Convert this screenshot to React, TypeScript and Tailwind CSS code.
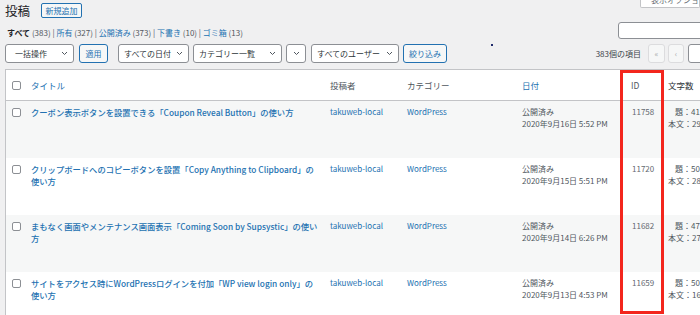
import React from 'react';

// 投稿一覧（WordPress 管理画面）の縮小スクリーンショット

const posts = [
  {
    title: ['クーポン表示ボタンを設置できる「Coupon Reveal Button」の使い方'],
    date: '2020年9月16日 5:52 PM',
    id: '11758',
    t: '41',
    b: '2913',
  },
  {
    title: ['クリップボードへのコピーボタンを設置「Copy Anything to Clipboard」の', '使い方'],
    date: '2020年9月15日 5:51 PM',
    id: '11720',
    t: '50',
    b: '2811',
  },
  {
    title: ['まもなく画面やメンテナンス画面表示「Coming Soon by Supsystic」の使い', '方'],
    date: '2020年9月14日 6:26 PM',
    id: '11682',
    t: '47',
    b: '2790',
  },
  {
    title: ['サイトをアクセス時にWordPressログインを付加「WP view login only」の', '使い方'],
    date: '2020年9月13日 4:53 PM',
    id: '11659',
    t: '50',
    b: '1644',
  },
];

const Chevron = () => (
  <svg width="7" height="5" viewBox="0 0 7 5" className="shrink-0">
    <path d="M1 1l2.5 2.5L6 1" fill="none" stroke="#50575e" strokeWidth="1" />
  </svg>
);

const Select = ({ label, className }: { label?: string; className: string }) => (
  <div
    className={`flex h-[19px] shrink-0 items-center justify-between overflow-hidden rounded-[3px] border border-[#8c8f94] bg-white pr-[5px] text-[#2c3338] ${className}`}
  >
    <span className="whitespace-nowrap">{label}</span>
    <Chevron />
  </div>
);

const Button = ({ label, className }: { label: string; className: string }) => (
  <div
    className={`flex h-[19px] shrink-0 items-center justify-center rounded-[3px] border border-[#2271b1] bg-[#f6f7f7] text-[#2271b1] ${className}`}
  >
    {label}
  </div>
);

const Checkbox = () => (
  <div className="h-[9px] w-[9px] rounded-[2px] border border-[#8c8f94] bg-white" />
);

const cols = 'grid grid-cols-[25px_299px_77px_115px_109px_37px_80px]';

export default function App() {
  return (
    <div className="relative h-[315px] w-[700px] overflow-hidden bg-[#f0f0f1] font-['Noto_Sans_CJK_JP',sans-serif] text-[8px] leading-[12px] text-[#3c434a]">
      {/* heading */}
      <div className="flex h-[20px] items-start">
        <div className="flex items-center pl-[5px] pt-[3px]">
          <h1 className="text-[12.5px] leading-[15px] text-[#1d2327]">投稿</h1>
          <div className="ml-[11px] flex h-[15px] w-[41px] items-center justify-center rounded-[2px] border border-[#2271b1] bg-[#f6f7f7] text-[#2271b1]">
            新規追加
          </div>
        </div>
        <div className="ml-auto h-[8px] w-[60px] overflow-hidden rounded-b-[2px] border border-t-0 border-[#c3c4c7] bg-white pl-[10px] text-[#646970]">
          <div className="-mt-[6px] whitespace-nowrap">表示オプション</div>
        </div>
      </div>

      {/* status links + search */}
      <div className="flex h-[20px] items-start">
        <div className="mt-[7px] whitespace-nowrap pl-[7px] text-[#50575e]">
          <span className="font-bold text-[#1d2327]">すべて</span> (383) |{' '}
          <span className="text-[#2271b1]">所有</span> (327) |{' '}
          <span className="text-[#2271b1]">公開済み</span> (373) |{' '}
          <span className="text-[#2271b1]">下書き</span> (10) |{' '}
          <span className="text-[#2271b1]">ゴミ箱</span> (13)
        </div>
        <div className="-mr-[10px] ml-auto mt-[2px] h-[17px] w-[92px] shrink-0 rounded-[3px] border border-[#8c8f94] bg-white" />
      </div>

      {/* toolbar */}
      <div className="mt-[4px] flex h-[19px] items-center">
        <Select label="一括操作" className="ml-[5px] w-[69px] pl-[9px]" />
        <Button label="適用" className="ml-[5px] w-[29px]" />
        <Select label="すべての日付" className="ml-[10px] w-[71px] pl-[5px]" />
        <Select label="カテゴリー一覧" className="ml-[4px] w-[89px] pl-[5px]" />
        <Select className="ml-[4px] w-[20px] pl-[5px]" />
        <Select label="すべてのユーザー" className="ml-[5px] w-[88px] pl-[5px]" />
        <Button label="絞り込み" className="ml-[4px] w-[44px]" />
        <div className="ml-[44px] h-[1.5px] w-[1.5px] self-start bg-[#1f2a6b]" />
        <div className="ml-auto whitespace-nowrap text-[#3c434a]">383個の項目</div>
        <div className="ml-[7px] flex h-[19px] w-[17px] shrink-0 items-center justify-center rounded-[3px] border border-[#dcdcde] bg-[#f6f7f7] text-[#a7aaad]">
          «
        </div>
        <div className="ml-[3px] flex h-[19px] w-[16px] shrink-0 items-center justify-center rounded-[3px] border border-[#dcdcde] bg-[#f6f7f7] text-[#a7aaad]">
          ‹
        </div>
        <div className="-mr-[10px] ml-[4px] h-[19px] w-[22px] shrink-0 rounded-[3px] border border-[#8c8f94] bg-white" />
      </div>

      {/* table */}
      <div className="ml-[5px] mt-[6px] w-[700px] border-l border-t border-[#c3c4c7] bg-white">
        <div className={`${cols} h-[31px] items-center border-b border-[#c3c4c7] text-[8.5px] text-[#50575e]`}>
          <div className="pl-[6px]">
            <Checkbox />
          </div>
          <div className="text-[#2271b1]">タイトル</div>
          <div>投稿者</div>
          <div>カテゴリー</div>
          <div className="text-[#2271b1]">日付</div>
          <div>ID</div>
          <div className="text-[#2c3338]">文字数</div>
        </div>
        {posts.map((p, i) => (
          <div
            key={p.id}
            className={`${cols} h-[57px] items-start pt-[5px] ${i % 2 === 0 ? 'bg-[#f6f7f7]' : 'bg-white'}`}
          >
            <div className="flex h-[12px] items-center pl-[6px]">
              <Checkbox />
            </div>
            <div className="whitespace-nowrap text-[8.3px] font-medium text-[#2271b1]">
              {p.title.map((line) => (
                <div key={line}>{line}</div>
              ))}
            </div>
            <div className="text-[#2271b1]">takuweb-local</div>
            <div className="text-[#2271b1]">WordPress</div>
            <div className="whitespace-nowrap text-[#50575e]">
              <div>公開済み</div>
              <div>{p.date}</div>
            </div>
            <div className="pl-[1px] text-[#646970]">{p.id}</div>
            <div className="whitespace-nowrap text-[#50575e]">
              <div className="pl-[7px]">題：{p.t}</div>
              <div>本文：{p.b}</div>
            </div>
          </div>
        ))}
      </div>

      {/* highlight around the ID column */}
      <div className="absolute left-[620px] top-[70px] h-[244px] w-[44px] border-[3px] border-[#f3261d]" />
    </div>
  );
}
